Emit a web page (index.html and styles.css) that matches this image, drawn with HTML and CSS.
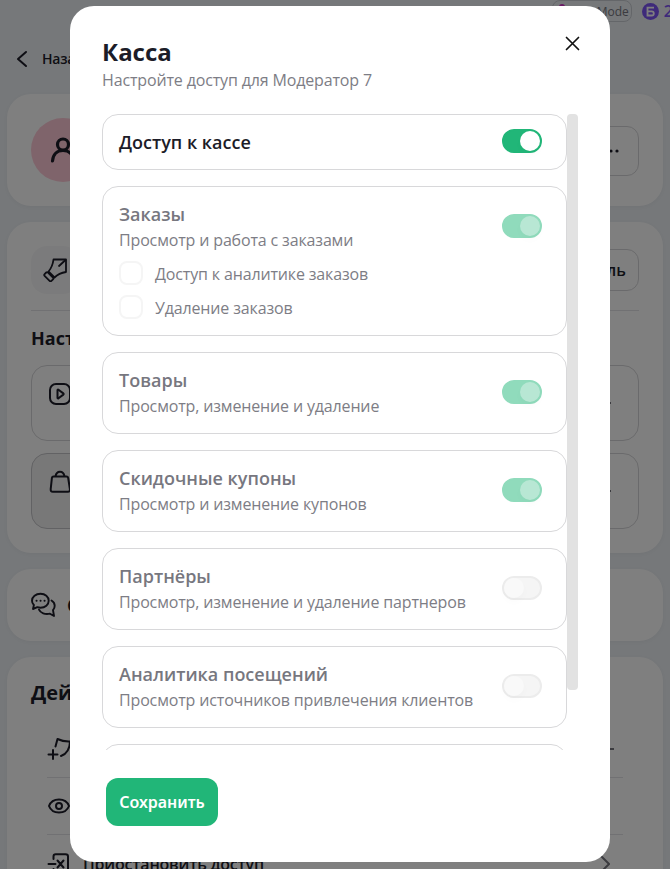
FILE: index.html
```html
<!DOCTYPE html>
<html lang="ru">
  <head>
    <meta charset="UTF-8" />
    <meta name="viewport" content="width=device-width, initial-scale=1.0" />
    <title>Касса</title>
    <link rel="stylesheet" href="styles.css">
  </head>
  <body>
    <div class="page">
      <div class="topbar">
        <div class="mode-badge"><span class="mode-dot"></span>Mode</div>
        <div class="coin">
          <svg width="17" height="17" viewBox="0 0 17 17" fill="none">
            <circle cx="8.5" cy="8.5" r="8.5" fill="#7c55f5" />
            <path d="M12 4.7H5.5v7.8h4.2a2.1 2.1 0 0 0 0-4.2H5.5" stroke="#fff" stroke-width="1.8" />
          </svg>
          <span>2</span>
        </div>
      </div>

      <div class="back">
        <svg width="12" height="18" viewBox="0 0 12 18" fill="none" stroke="#1c1c28" stroke-width="2" stroke-linecap="round" stroke-linejoin="round">
          <path d="M10 2L2 9l8 7" />
        </svg>
        <span>Назад</span>
      </div>

      <!-- Профиль -->
      <div class="card profile">
        <div class="avatar">
          <svg width="26" height="26" viewBox="0 0 26 26" fill="none" stroke="#1c1c28" stroke-width="3.200" stroke-linecap="round">
            <circle cx="13" cy="7.500" r="5.500" />
            <path d="M2.500 24c.5-6.500 4.500-10.500 10.500-10.500s10 4 10.500 10.500" />
          </svg>
        </div>
        <div class="btn-more">
          <svg width="16" height="4" viewBox="0 0 16 4" fill="#1c1c28">
            <circle cx="2" cy="2" r="1.600" />
            <circle cx="8" cy="2" r="1.600" />
            <circle cx="14" cy="2" r="1.600" />
          </svg>
        </div>
      </div>

      <!-- Настройки -->
      <div class="card settings">
        <div class="role">
          <div class="role-icon">
            <svg width="24" height="24" viewBox="0 0 24 24" fill="none" stroke="#1c1c28" stroke-width="1.800" stroke-linejoin="round" stroke-linecap="round">
              <path d="M10.500 1.500h12.500v12.500c-3.500.5-8 2-11.500 5.500L5.500 13.500c3-3.500 4.500-8 5-12z" />
              <path d="M16 8l6.500-6" />
              <path d="M5 14.500l5 5c.6.600.6 1.200 0 1.800l-1.600 1.600c-.6.600-1.200.6-1.800 0l-5-5c-.6-.6-.6-1.200 0-1.800l1.600-1.600c.6-.6 1.200-.6 1.800 0z" />
            </svg>
          </div>
          <div class="btn-role">Роль</div>
        </div>
        <h2 class="settings-title">Наст</h2>
        <div class="tiles">
          <div class="tile">
            <svg width="24" height="24" viewBox="0 0 24 24" fill="none" stroke="#1c1c28" stroke-width="2" stroke-linejoin="round">
              <rect x="2" y="2" width="20" height="20" rx="6" />
              <path d="M9.500 8.200v7.600c0 .6.5.8 1 .5l4.800-3.700c.5-.4.5-.8 0-1.200l-4.800-3.700c-.5-.4-1-.1-1 .5z" />
            </svg>
          </div>
          <div class="tile"><span class="tile-end"></span></div>
          <div class="tile active">
            <svg width="24" height="24" viewBox="0 0 24 24" fill="none" stroke="#1c1c28" stroke-width="2" stroke-linejoin="round">
              <path d="M5.500 6.500h13c1 0 1.500.5 1.700 1.500l1.700 11c.2 1.800-.5 2.700-2 2.700H4.800c-1.600 0-2.300-.9-2.100-2.700l1.200-11c.2-1 .6-1.500 1.600-1.500z" />
              <path d="M7.500 6.500C8 3.500 9 1.800 12 1.800s4 1.700 4.500 4.700" />
            </svg>
          </div>
          <div class="tile"><span class="tile-end"></span></div>
        </div>
      </div>

      <!-- Сообщения -->
      <div class="card messages">
        <svg width="26" height="26" viewBox="0 0 26 26" fill="none" stroke="#1c1c28" stroke-width="1.900" stroke-linejoin="round" stroke-linecap="round">
          <path d="M9.500 1.800c4.700 0 8.200 2.800 8.200 6.900s-3.500 7-8.200 7c-1.100 0-2.200-.2-3.200-.5L2 17l.9-4C1.700 11.800 1 10.300 1 8.700c0-4.100 3.800-6.900 8.500-6.900z" />
          <path d="M20.500 8.500c2 1.200 3.200 3 3.200 5.200 0 1.700-.7 3.300-1.700 4.500l1 5.800-4-2.300c-5 1.200-9.500-.7-11-4" />
          <path d="M5.500 8.700h.1M9.500 8.700h.1M13.500 8.700h.1" stroke-width="2" />
        </svg>
        <span>С</span>
      </div>

      <!-- Действия -->
      <div class="card actions">
        <h2 class="actions-title">Дей</h2>
        <div class="action">
          <svg width="24" height="24" viewBox="0 0 24 24" fill="none" stroke="#1c1c28" stroke-width="2" stroke-linecap="round" stroke-linejoin="round">
            <path d="M1.500 17.500h9M6 13v9M8.500 9.500l2-7.500c4 2 8 2.700 12.500 2.500-.2 7-2 12-9 14.500" />
          </svg>
          <svg class="arrow first" width="10" height="18" viewBox="0 0 10 18" fill="none" stroke="#77777f" stroke-width="2"><path d="M0 9h10" /></svg>
        </div>
        <div class="action">
          <svg width="24" height="24" viewBox="0 0 24 24" fill="none" stroke="#1c1c28" stroke-width="2">
            <path d="M2 12c1.500-4 5.500-6.500 10-6.500s8.500 2.500 10 6.500c-1.500 4-5.500 6.500-10 6.500S3.500 16 2 12z" />
            <circle cx="12" cy="12" r="3" />
          </svg>
        </div>
        <div class="action last">
          <svg width="24" height="24" viewBox="0 0 24 24" fill="none" stroke="#1c1c28" stroke-width="2" stroke-linecap="round" stroke-linejoin="round">
            <path d="M6.500 7V4.500c0-1.500.7-2.300 2.200-2.300h9.800c1.600 0 2.500.8 2.500 2.300v15c0 1.500-.9 2.300-2.500 2.300H8.700c-1.500 0-2.200-.8-2.200-2.300V17" />
            <path d="M1.500 12h7M10.500 8.500l6 7M16.500 8.500l-6 7" />
          </svg>
          <span>Приостановить доступ</span>
          <svg class="arrow" width="10" height="18" viewBox="0 0 10 18" fill="none" stroke="#77777f" stroke-width="2"><path d="M1 1l8 8-8 8" /></svg>
        </div>
      </div>
    </div>

    <div class="overlay">
      <div class="modal">
        <div class="modal-header">
          <div>
            <h1 class="modal-title">Касса</h1>
            <p class="modal-subtitle">Настройте доступ для Модератор 7</p>
          </div>
          <svg class="close" width="15" height="15" viewBox="0 0 15 15" fill="none" stroke="#111" stroke-width="1.700" stroke-linecap="round">
            <path d="M1.500 1.500l12 12M13.500 1.500l-12 12" />
          </svg>
        </div>

        <div class="modal-body">
          <div class="list">
            <div class="option main">
              <div class="option-name">Доступ к кассе</div>
              <div class="toggle on"></div>
            </div>

            <div class="option">
              <div class="option-row">
                <div>
                  <div class="option-name">Заказы</div>
                  <div class="option-text">Просмотр и работа с заказами</div>
                </div>
                <div class="toggle on disabled"></div>
              </div>
              <div class="check"><span class="checkbox"></span>Доступ к аналитике заказов</div>
              <div class="check"><span class="checkbox"></span>Удаление заказов</div>
            </div>

            <div class="option">
              <div class="option-row">
                <div>
                  <div class="option-name">Товары</div>
                  <div class="option-text">Просмотр, изменение и удаление</div>
                </div>
                <div class="toggle on disabled"></div>
              </div>
            </div>

            <div class="option">
              <div class="option-row">
                <div>
                  <div class="option-name">Скидочные купоны</div>
                  <div class="option-text">Просмотр и изменение купонов</div>
                </div>
                <div class="toggle on disabled"></div>
              </div>
            </div>

            <div class="option">
              <div class="option-row">
                <div>
                  <div class="option-name">Партнёры</div>
                  <div class="option-text">Просмотр, изменение и удаление партнеров</div>
                </div>
                <div class="toggle disabled"></div>
              </div>
            </div>

            <div class="option">
              <div class="option-row">
                <div>
                  <div class="option-name">Аналитика посещений</div>
                  <div class="option-text">Просмотр источников привлечения клиентов</div>
                </div>
                <div class="toggle disabled"></div>
              </div>
            </div>

            <div class="option next"></div>
          </div>
          <div class="scrollbar"></div>
        </div>

        <button class="save">Сохранить</button>
      </div>
    </div>
  </body>
</html>
```
FILE: styles.css
```css
* {
  margin: 0;
  padding: 0;
  box-sizing: border-box;
}

body {
  font-family: "Open Sans", "Noto Sans", sans-serif;
  background: #ecf0f4;
  color: #1c1c28;
  height: 100vh;
  overflow: hidden;
}

.page {
  height: 869px;
  padding: 0 7px;
  overflow: hidden;
}

.topbar {
  height: 46px;
  display: flex;
  justify-content: flex-end;
  align-items: flex-start;
  gap: 10px;
  margin-right: -10px;
}

.mode-badge {
  height: 22px;
  width: 80px;
  border: 1px solid #c9cdd3;
  border-radius: 8px;
  display: flex;
  align-items: center;
  justify-content: space-between;
  padding: 0 2px 0 6px;
  font-size: 12px;
  font-weight: 500;
  color: #77777f;
}

.mode-dot {
  width: 6px;
  height: 6px;
  border-radius: 50%;
  background: #d233c8;
  margin-bottom: 9px;
}

.coin {
  display: flex;
  align-items: center;
  gap: 5px;
  height: 22px;
  font-size: 16px;
  font-weight: 600;
  color: #7c55f5;
}

.back {
  height: 26px;
  display: flex;
  align-items: center;
  gap: 14px;
  padding-left: 9px;
  margin-bottom: 22px;
  font-size: 14px;
  font-weight: 600;
  letter-spacing: -0.2px;
}

.back span {
  margin-bottom: 1px;
}

.card {
  background: #fff;
  border-radius: 24px;
  padding: 24px;
  margin-bottom: 16px;
  box-shadow: 0 1px 4px rgba(0, 0, 0, 0.04);
}

.profile {
  height: 112px;
  display: flex;
  justify-content: space-between;
  align-items: center;
}

.avatar {
  width: 64px;
  height: 64px;
  border-radius: 50%;
  background: #ffc9d6;
  display: flex;
  align-items: center;
  justify-content: center;
}

.btn-more {
  width: 56px;
  height: 50px;
  margin-top: 2px;
  border: 1px solid #d5d5d8;
  border-radius: 12px;
  display: flex;
  align-items: center;
  justify-content: center;
}

.settings {
  height: 331px;
}

.role {
  height: 65px;
  display: flex;
  justify-content: space-between;
  align-items: flex-start;
  border-bottom: 1px solid #e3e3e6;
}

.role-icon {
  width: 48px;
  height: 48px;
  border-radius: 16px;
  background: #f7f7f8;
  display: flex;
  align-items: center;
  justify-content: center;
}

.btn-role {
  height: 42px;
  margin-top: 3px;
  padding: 0 12px;
  border: 1px solid #d5d5d8;
  border-radius: 12px;
  display: flex;
  align-items: center;
  font-size: 16px;
  font-weight: 600;
}

.settings-title {
  height: 54px;
  line-height: 54px;
  font-size: 18px;
  font-weight: 700;
}

.tiles {
  display: grid;
  grid-template-columns: 1fr 1fr;
  gap: 12px;
}

.tile {
  height: 76px;
  border: 1px solid #d5d5d8;
  border-radius: 16px;
  padding: 16px;
  display: flex;
}

.tile.active {
  background: #f0f0f0;
  border-color: #c4c4c8;
}

.tile-end {
  width: 5px;
  height: 2px;
  margin: 20px 11px 0 auto;
  background: #77777f;
}

.messages {
  height: 72px;
  display: flex;
  align-items: center;
  gap: 10px;
  font-size: 18px;
  font-weight: 700;
}

.actions {
  padding-top: 20px;
  height: 300px;
}

.actions-title {
  height: 44px;
  line-height: 32px;
  font-size: 20px;
  font-weight: 700;
}

.action {
  height: 57px;
  margin: 0 16px;
  border-bottom: 1px solid #e3e3e6;
  display: flex;
  align-items: center;
  gap: 12px;
  font-size: 16px;
  font-weight: 600;
  letter-spacing: -0.2px;
}

.action.last {
  border-bottom: none;
}

.arrow {
  margin-left: auto;
  margin-right: 13px;
}

.arrow.first {
  margin-right: 9px;
}

/* Модальное окно */
.overlay {
  position: fixed;
  inset: 0;
  background: rgba(0, 0, 0, 0.5);
  padding: 6px 60px 0 70px;
}

.modal {
  width: 540px;
  height: 856px;
  background: #fff;
  border-radius: 24px;
  padding: 30px 32px 36px;
}

.modal-header {
  height: 78px;
  display: flex;
  justify-content: space-between;
}

.modal-title {
  font-size: 24px;
  line-height: 32px;
  font-weight: 700;
}

.modal-subtitle {
  font-size: 16px;
  line-height: 24px;
  letter-spacing: -0.15px;
  color: #7d7d85;
}

.close {
  margin: 0 -2px 0 0;
}

.modal-body {
  height: 636px;
  display: flex;
  overflow: hidden;
}

.list {
  width: 465px;
}

.scrollbar {
  width: 11px;
  height: 576px;
  border-radius: 4px;
  background: #e2e2e2;
}

.option {
  border: 1px solid #d8d8da;
  border-radius: 16px;
  padding: 14px 24px 15px 16px;
  margin-bottom: 16px;
  color: #77777f;
}

.option.main {
  height: 56px;
  display: flex;
  justify-content: space-between;
  color: #1c1c28;
}

.option.next {
  height: 82px;
}

.option-row {
  display: flex;
  justify-content: space-between;
}

.option-row .toggle {
  margin-top: 13px;
}

.option-name {
  font-size: 18px;
  line-height: 26px;
  font-weight: 600;
}

.option-text {
  margin-top: 1px;
  font-size: 16px;
  line-height: 24px;
  letter-spacing: -0.15px;
  color: #7d7d85;
}

.check {
  height: 24px;
  margin-top: 10px;
  display: flex;
  align-items: center;
  gap: 12px;
  font-size: 16px;
  letter-spacing: -0.15px;
  color: #7d7d85;
}

.checkbox {
  width: 24px;
  height: 24px;
  margin-bottom: 2px;
  border: 2px solid #f5f5f5;
  border-radius: 8px;
}

.toggle {
  width: 40px;
  height: 24px;
  border-radius: 12px;
  background: #f5f5f5;
  border: 2px solid #ececec;
  flex-shrink: 0;
}

.toggle::before {
  content: "";
  display: block;
  width: 20px;
  height: 20px;
  border-radius: 50%;
  background: #f9f9f9;
  box-shadow: 0 4px 8px rgba(0, 0, 0, 0.02);
}

.toggle.on {
  background: #21b678;
  border-color: #21b678;
}

.toggle.on::before {
  margin-left: 16px;
  background: #fff;
}

.toggle.on.disabled {
  background: #90dbbc;
  border-color: #90dbbc;
}

.toggle.on.disabled::before {
  background: #b8e7d4;
}

.save {
  display: block;
  width: 112px;
  height: 48px;
  margin: 28px 0 0 4px;
  border: none;
  border-radius: 12px;
  background: #21b678;
  color: #fff;
  font-family: "Noto Sans", sans-serif;
  font-size: 16px;
  font-weight: 600;
}
```
